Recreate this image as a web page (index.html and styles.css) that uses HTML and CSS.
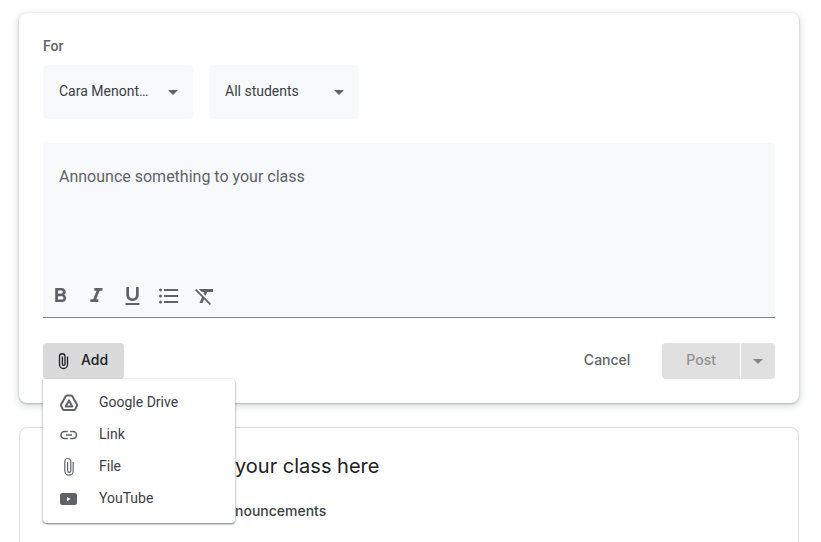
FILE: index.html
```html
<!DOCTYPE html>
<html lang="en">
<head>
<meta charset="utf-8">
<title>Class stream</title>
<link rel="stylesheet" href="styles.css">
</head>
<body>
<main class="stream">
  <form class="card composer">
    <div class="for-label">For</div>
    <div class="audience">
      <div class="picker">
        <select aria-label="Class"><option>Cara Menont…</option></select>
        <svg class="caret" viewBox="0 0 10 5"><path d="M0 0h10L5 5z"/></svg>
      </div>
      <div class="picker">
        <select aria-label="Students"><option>All students</option></select>
        <svg class="caret" viewBox="0 0 10 5"><path d="M0 0h10L5 5z"/></svg>
      </div>
    </div>
    <div class="editor">
      <textarea class="message" aria-label="Announcement" placeholder="Announce something to your class"></textarea>
      <div class="toolbar">
        <button type="button" class="tool" aria-label="Bold"><svg viewBox="0 0 24 24"><path fill-rule="evenodd" d="M16 10.800c1-.7 1.700-1.700 1.700-2.800 0-2.300-1.750-4-4-4H7.200v14h7c2.200 0 3.900-1.700 3.900-3.800 0-1.500-.86-2.800-2.100-3.400zM10 6.500h3.300c.9 0 1.500.67 1.500 1.500s-.6 1.500-1.500 1.500H10zM13.800 15.500H10v-3.200h3.800c.9 0 1.600.7 1.600 1.600s-.7 1.600-1.600 1.600z"/></svg></button>
        <button type="button" class="tool" aria-label="Italic"><svg viewBox="0 0 24 24"><path d="M10.300 4v2.700h2.300l-3.400 8.600H6.300V18h8v-2.700h-2.100l3.400-8.600h2.900V4z"/></svg></button>
        <button type="button" class="tool" aria-label="Underline"><svg viewBox="0 0 24 24"><path d="M12.500 17c3.500 0 6.200-2.600 6.200-6V3H16v8c0 2-1.500 3.500-3.500 3.500S9 13 9 11V3H6.300v8c0 3.400 2.700 6 6.200 6zm-7 2v2h14v-2z"/></svg></button>
        <button type="button" class="tool" aria-label="Bulleted list"><svg viewBox="0 0 24 24"><path d="M8 5h14v2H8zM8 11h14v2H8zM8 17h14v2H8z"/><circle cx="4.500" cy="6" r="1.500"/><circle cx="4.500" cy="12" r="1.500"/><circle cx="4.500" cy="18" r="1.500"/></svg></button>
        <button type="button" class="tool" aria-label="Remove formatting"><svg viewBox="0 0 24 24"><path d="M4.270 5L3 6.270l6.970 6.970L7.500 19h3l1.570-3.660L17.730 21 19 19.730 4.550 5.270zM7 5v.18L9.820 8h2.400l-.72 1.680 2.100 2.100L15.210 8H21V5z"/></svg></button>
      </div>
    </div>
    <div class="actions">
      <div class="add">
        <button type="button" class="button add-button" aria-haspopup="menu" aria-expanded="true">
          <svg class="clip" viewBox="0 0 12 18"><path d="M10.500 4.500v8a4 4 0 0 1-8 0V4.500a2.750 2.750 0 0 1 5.500 0v7.500a1.300 1.300 0 0 1-2.600 0V4.500"/></svg>
          <span>Add</span>
        </button>
        <div class="menu" role="menu">
          <button type="button" class="menu-item" role="menuitem"><svg class="menu-icon line" viewBox="0 0 20 20"><path d="M8.200 2.500h3.600q1 0 1.500.8l4.500 8q.5.9 0 1.800l-1.600 3.100q-.5.900-1.500.900H5.300q-1 0-1.500-.9L2.200 13.100q-.5-.9 0-1.800l4.500-8q.5-.8 1.500-.8z"/><path d="M10 7.500l-3.300 6h6.600z"/></svg><span>Google Drive</span></button>
          <button type="button" class="menu-item" role="menuitem"><svg class="menu-icon line medium" viewBox="0 0 20 20"><path d="M8.800 6.500H5.500a3.500 3.500 0 0 0 0 7h3.300M11.200 6.500h2.800a3.500 3.500 0 0 1 0 7h-2.800M7 10h6"/></svg><span>Link</span></button>
          <button type="button" class="menu-item" role="menuitem"><svg class="menu-icon line thin" viewBox="0 0 20 20"><path d="M14.200 5v9a4.200 4.200 0 0 1-8.400 0V4.500a3 3 0 0 1 6 0v9.200a1.600 1.600 0 0 1-3.200 0V5"/></svg><span>File</span></button>
          <button type="button" class="menu-item" role="menuitem"><svg class="menu-icon" viewBox="0 0 20 20"><path fill-rule="evenodd" d="M3.500 4h12q2.500 0 2.500 2.500v7q0 2.500-2.500 2.500h-12Q1 16 1 13.500v-7Q1 4 3.500 4zM8 7.800v4.400l3.500-2.200z"/></svg><span>YouTube</span></button>
        </div>
      </div>
      <div class="submit">
        <button type="button" class="button cancel"><span>Cancel</span></button>
        <div class="split">
          <button type="submit" class="button post" disabled><span>Post</span></button>
          <button type="button" class="button more" aria-label="More posting options" disabled><svg class="caret" viewBox="0 0 10 5"><path d="M0 0h10L5 5z"/></svg></button>
        </div>
      </div>
    </div>
  </form>
  <section class="card notice">
    <h2>your class here</h2>
    <p>nouncements</p>
  </section>
</main>
</body>
</html>
```
FILE: styles.css
```css
* { box-sizing: border-box; }
html { overflow: hidden; }
body {
  margin: 0;
  background: #fff;
  color: #3c4043;
  font: 14px/20px Roboto, "Liberation Sans", sans-serif;
}
button, select, textarea { font: inherit; color: inherit; border: 0; margin: 0; }
svg { display: block; fill: currentColor; }
.stream {
  display: flex;
  flex-direction: column;
  gap: 24px;
  padding: 13px 22px 0 19px;
}
.card { border-radius: 8px; background: #fff; }
.composer {
  padding: 24px;
  box-shadow: 0 1px 2px rgba(60, 64, 67, .3), 0 2px 6px 2px rgba(60, 64, 67, .15);
}
.for-label { line-height: 18px; margin-bottom: 10px; color: #5f6368; font-weight: 500; }
.audience { display: flex; gap: 16px; margin-bottom: 24px; }
.picker { position: relative; width: 150px; }
.picker select {
  appearance: none;
  width: 100%;
  height: 54px;
  padding: 0 40px 2px 16px;
  border-radius: 4px;
  background: #f8f9fa;
}
.picker .caret { position: absolute; right: 15px; top: 25px; color: #5f6368; pointer-events: none; }
.caret { width: 10px; height: 5px; }
.editor { border-bottom: 1px solid #80868b; border-radius: 4px 4px 0 0; background: #f8f9fa; }
.message {
  display: block;
  width: 100%;
  height: 135px;
  padding: 22px 16px;
  resize: none;
  outline: 0;
  background: transparent;
  font-size: 16px;
  line-height: 24px;
}
.message::placeholder { color: #5f6368; opacity: 1; }
.toolbar { display: flex; gap: 12px; padding: 6px 5px 9px; }
.tool { width: 24px; height: 24px; padding: 0; background: transparent; color: #5f6368; }
.tool svg { width: 24px; height: 24px; }
.actions { display: flex; justify-content: space-between; margin-top: 25px; }
.add { position: relative; }
.button {
  display: flex;
  align-items: center;
  height: 36px;
  border-radius: 4px;
  font-family: Inter, sans-serif;
  font-size: 14px;
  font-weight: 500;
}
.button span, .menu-item span { padding-bottom: 2px; }
.add-button { gap: 12px; padding: 0 16px 0 14px; background: #dadada; color: #202124; }
.clip { width: 12px; height: 18px; fill: none; stroke: currentColor; stroke-width: 1.3; }
.menu {
  position: absolute;
  top: 36px;
  left: 0;
  z-index: 1;
  width: 192px;
  padding: 8px 0;
  border-radius: 0 4px 4px 4px;
  background: #fff;
  box-shadow: 0 1px 2px rgba(60, 64, 67, .6), 0 1px 3px rgba(60, 64, 67, .2);
}
.menu-item {
  display: flex;
  align-items: center;
  gap: 20px;
  width: 100%;
  height: 32px;
  padding: 0 16px;
  background: transparent;
  text-align: left;
}
.menu-icon { width: 20px; height: 20px; color: #5f6368; }
.line { fill: none; stroke: currentColor; stroke-width: 2; stroke-linejoin: round; }
.medium { stroke-width: 1.6; }
.thin { stroke-width: 1.2; }
.submit { display: flex; gap: 16px; }
.cancel { padding: 0 16px; background: transparent; color: #5f6368; }
.split { display: flex; gap: 1px; }
.post { padding: 0 24px; border-radius: 4px 0 0 4px; background: #e0e0e0; color: #919191; }
.more { justify-content: center; width: 34px; padding: 0; border-radius: 0 4px 4px 0; background: #e0e0e0; color: #858585; }
.notice { padding: 24px 24px 48px 215px; border: 1px solid #dadce0; }
.notice h2 {
  margin: 0 0 21px;
  color: #202124;
  font: 400 20px/28px Inter, sans-serif;
}
.notice p { margin: 0; font: 500 14px/20px Inter, sans-serif; }
```
